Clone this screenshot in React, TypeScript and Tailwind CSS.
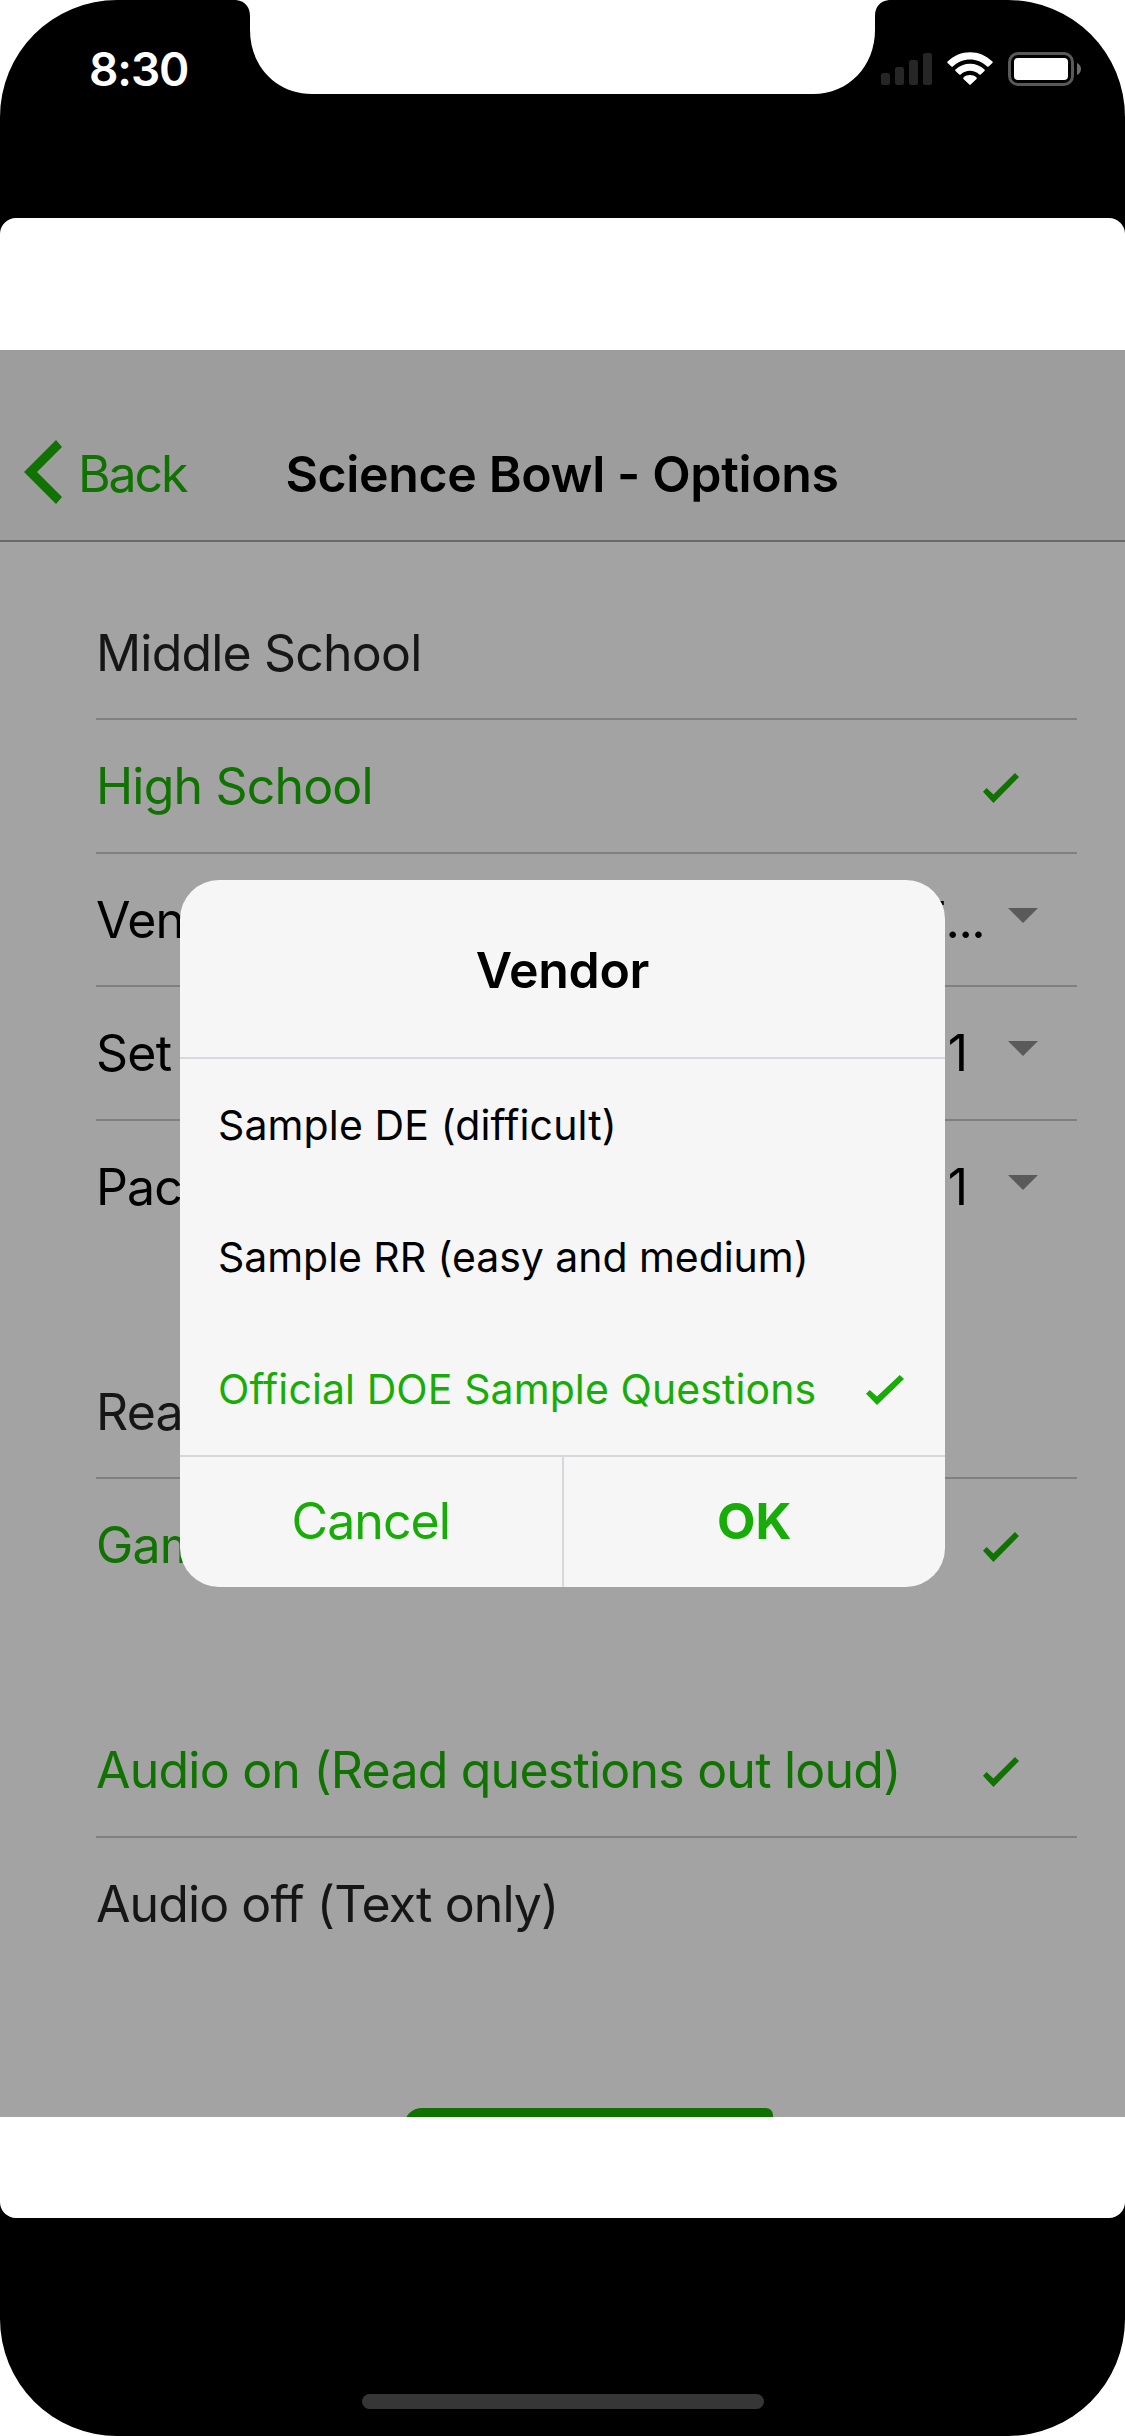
import React from "react";

function Check({ className }: { className: string }) {
  return (
    <svg viewBox="0 0 36 30.3" preserveAspectRatio="none" className={className} fill="currentColor">
      <path d="M0 19 L3.6 15.2 L10.4 21.8 L32 0 L36 4 L10.4 30.3 Z" />
    </svg>
  );
}

function StatusBar() {
  return (
    <div className="relative h-[218px] text-white">
      <svg className="absolute left-0 top-0" width="1125" height="96" viewBox="0 0 1125 96" fill="#fff">
        <path d="M236 0 C246 1 250 8 250 16 V30 C250 66 276 94 312 94 H813 C849 94 875 66 875 30 V16 C875 8 879 1 889 0 Z" />
      </svg>
      <div className="flex h-[138px] items-center pl-[89px] pr-[44px]">
        <span className="text-[46px] font-semibold tracking-[-1.1px]">8:30</span>
        <svg className="ml-auto" width="51" height="34" viewBox="0 0 51 34" fill="#262626">
          <rect x="0" y="21" width="9" height="12" rx="2.5" />
          <rect x="14" y="15" width="9" height="18" rx="2.5" />
          <rect x="28" y="8" width="9" height="25" rx="2.5" />
          <rect x="42" y="1" width="9" height="32" rx="2.5" />
        </svg>
        <svg className="ml-[15px]" width="46" height="34" viewBox="0 0 46 34" fill="#fff">
          <path d="M0.6 9.6 C13 -3 33 -3 45.4 9.6 C45.9 10.1 45.9 10.5 45.4 11 L41.6 14.6 C41.1 15 40.7 15 40.2 14.6 C30.5 5.2 15.5 5.2 5.8 14.6 C5.3 15 4.9 15 4.4 14.6 L0.6 11 C0.1 10.5 0.1 10.1 0.6 9.6 Z" />
          <path d="M8.5 17.5 C16.5 9.7 29.5 9.7 37.5 17.5 C38 18 38 18.4 37.5 18.9 L33.7 22.5 C33.2 22.9 32.8 22.9 32.3 22.5 C27 17.6 19 17.6 13.7 22.5 C13.2 22.9 12.8 22.9 12.3 22.5 L8.5 18.9 C8 18.4 8 18 8.5 17.5 Z" />
          <path d="M16.5 25.5 C20.2 22.3 25.8 22.3 29.5 25.5 C30 26 30 26.4 29.5 26.9 L23.7 32.6 C23.2 33.1 22.8 33.1 22.3 32.6 L16.5 26.9 C16 26.4 16 26 16.5 25.5 Z" />
        </svg>
        <svg className="ml-[15px]" width="73" height="34" viewBox="0 0 73 34">
          <rect x="1.5" y="1.5" width="63" height="31" rx="8.5" fill="none" stroke="#595959" strokeWidth="3" />
          <rect x="6" y="6" width="54" height="22" rx="4" fill="#fff" />
          <path d="M69 11 C71.7 12.2 73 14.5 73 17 C73 19.5 71.7 21.8 69 23 Z" fill="#6b6b6b" />
        </svg>
      </div>
    </div>
  );
}

function Header() {
  return (
    <div className="grid h-[192px] grid-cols-[1fr_auto_1fr] items-center border-b-2 border-[#686868] bg-[#9d9d9d] pt-[58px]">
      <div className="flex items-center pl-[24px] text-[#107200]">
        <svg width="38" height="64" viewBox="0 0 38 64" fill="currentColor" className="relative -top-[2px]">
          <path d="M0 32 L32 0 L38 7 L13 32 L38 57 L32 64 Z" />
        </svg>
        <span className="ml-[16px] text-[50px] tracking-[-2.1px]">Back</span>
      </div>
      <h1 className="pr-px text-[50px] font-semibold tracking-[-0.37px] text-black">Science Bowl - Options</h1>
    </div>
  );
}

type RowProps = {
  label: string;
  tracking?: string;
  checked?: boolean;
  value?: string;
  last?: boolean;
  dark?: boolean;
};

function Row({ label, tracking = "tracking-[-0.82px]", checked, value, last, dark }: RowProps) {
  const color = checked ? "text-[#107200]" : dark ? "text-black" : "text-[#161616]";
  return (
    <div className={`flex h-[133.5px] items-center whitespace-nowrap border-b-2 ${last ? "border-transparent" : "border-[#808083]"} ${color}`}>
      <span className={`pt-[2px] ${tracking}`}>{label}</span>
      {checked && <Check className="relative top-[2px] ml-auto mr-[58px] h-[30px] w-[36px]" />}
      {value && (
        <>
          <span className={`ml-auto pt-[2px] ${value.length > 1 ? "mr-[24px] tracking-[-1.6px]" : "mr-[40px]"}`}>{value}</span>
          <svg className="relative -top-[4px] mr-[39px]" width="30" height="15" viewBox="0 0 30 15" fill="#5a5a5a">
            <path d="M0 0 H30 L15 15 Z" />
          </svg>
        </>
      )}
    </div>
  );
}

function Dialog() {
  return (
    <div className="absolute left-[180px] top-[880px] flex h-[707px] w-[765px] flex-col overflow-hidden rounded-[39px] bg-[#f6f6f6] text-black">
      <div className="flex h-[179px] items-center justify-center border-b-2 border-[#d8d8de] pt-[4px] text-[50px] font-semibold tracking-[-0.3px]">
        Vendor
      </div>
      <div className="pl-[38px] pr-[41px] text-[41px]">
        <div className="flex h-[132px] items-center pt-[2px] tracking-[0.12px]">Sample DE (difficult)</div>
        <div className="flex h-[132px] items-center pt-[2px] tracking-[-0.05px]">Sample RR (easy and medium)</div>
        <div className="flex h-[132px] items-center justify-between pt-[2px] tracking-[0.09px] text-[#18ac08]">
          Official DOE Sample Questions
          <Check className="h-[30px] w-[38px]" />
        </div>
      </div>
      <div className="flex flex-1 border-t-2 border-[#d8d8dc] text-[50px] text-[#18ac08]">
        <div className="flex flex-1 items-center justify-center border-r-2 border-[#d8d8dc] pb-px tracking-[-0.93px]">Cancel</div>
        <div className="flex flex-1 items-center justify-center pb-px font-bold">OK</div>
      </div>
    </div>
  );
}

export default function App() {
  return (
    <div className="h-[2436px] w-[1125px] overflow-hidden bg-white font-[Inter,sans-serif]">
      <div className="relative flex h-full flex-col overflow-hidden rounded-[117px] bg-black">
        <StatusBar />
        <div className="h-[2000px] rounded-[16px] bg-white pt-[132px]">
          <div className="h-[1767px] overflow-hidden bg-[#a3a3a3]">
            <Header />
            <div className="pl-[96px] pr-[48px] pt-[44.5px] text-[50px]">
              <Row label="Middle School" />
              <Row label="High School" checked />
              <Row label="Vendor" value="Official DOE..." dark />
              <Row label="Set" value="1" dark tracking="tracking-[-0.8px]" />
              <Row label="Packet" value="1" dark last />
              <div className="h-[91.5px]" />
              <Row label="Reading mode" />
              <Row label="Game mode" checked last />
              <div className="h-[91.5px]" />
              <Row label="Audio on (Read questions out loud)" checked tracking="tracking-[-0.78px]" />
              <Row label="Audio off (Text only)" last tracking="tracking-[-0.91px]" />
            </div>
            <div className="ml-[404px] mt-[136.500px] h-[120px] w-[369px] rounded-l-[18px] rounded-r-[7px] bg-[#107000]" />
          </div>
        </div>
        <div className="mx-auto mt-[176px] h-[15px] w-[402px] rounded-[8px] bg-[#363636]" />
        <Dialog />
      </div>
    </div>
  );
}
